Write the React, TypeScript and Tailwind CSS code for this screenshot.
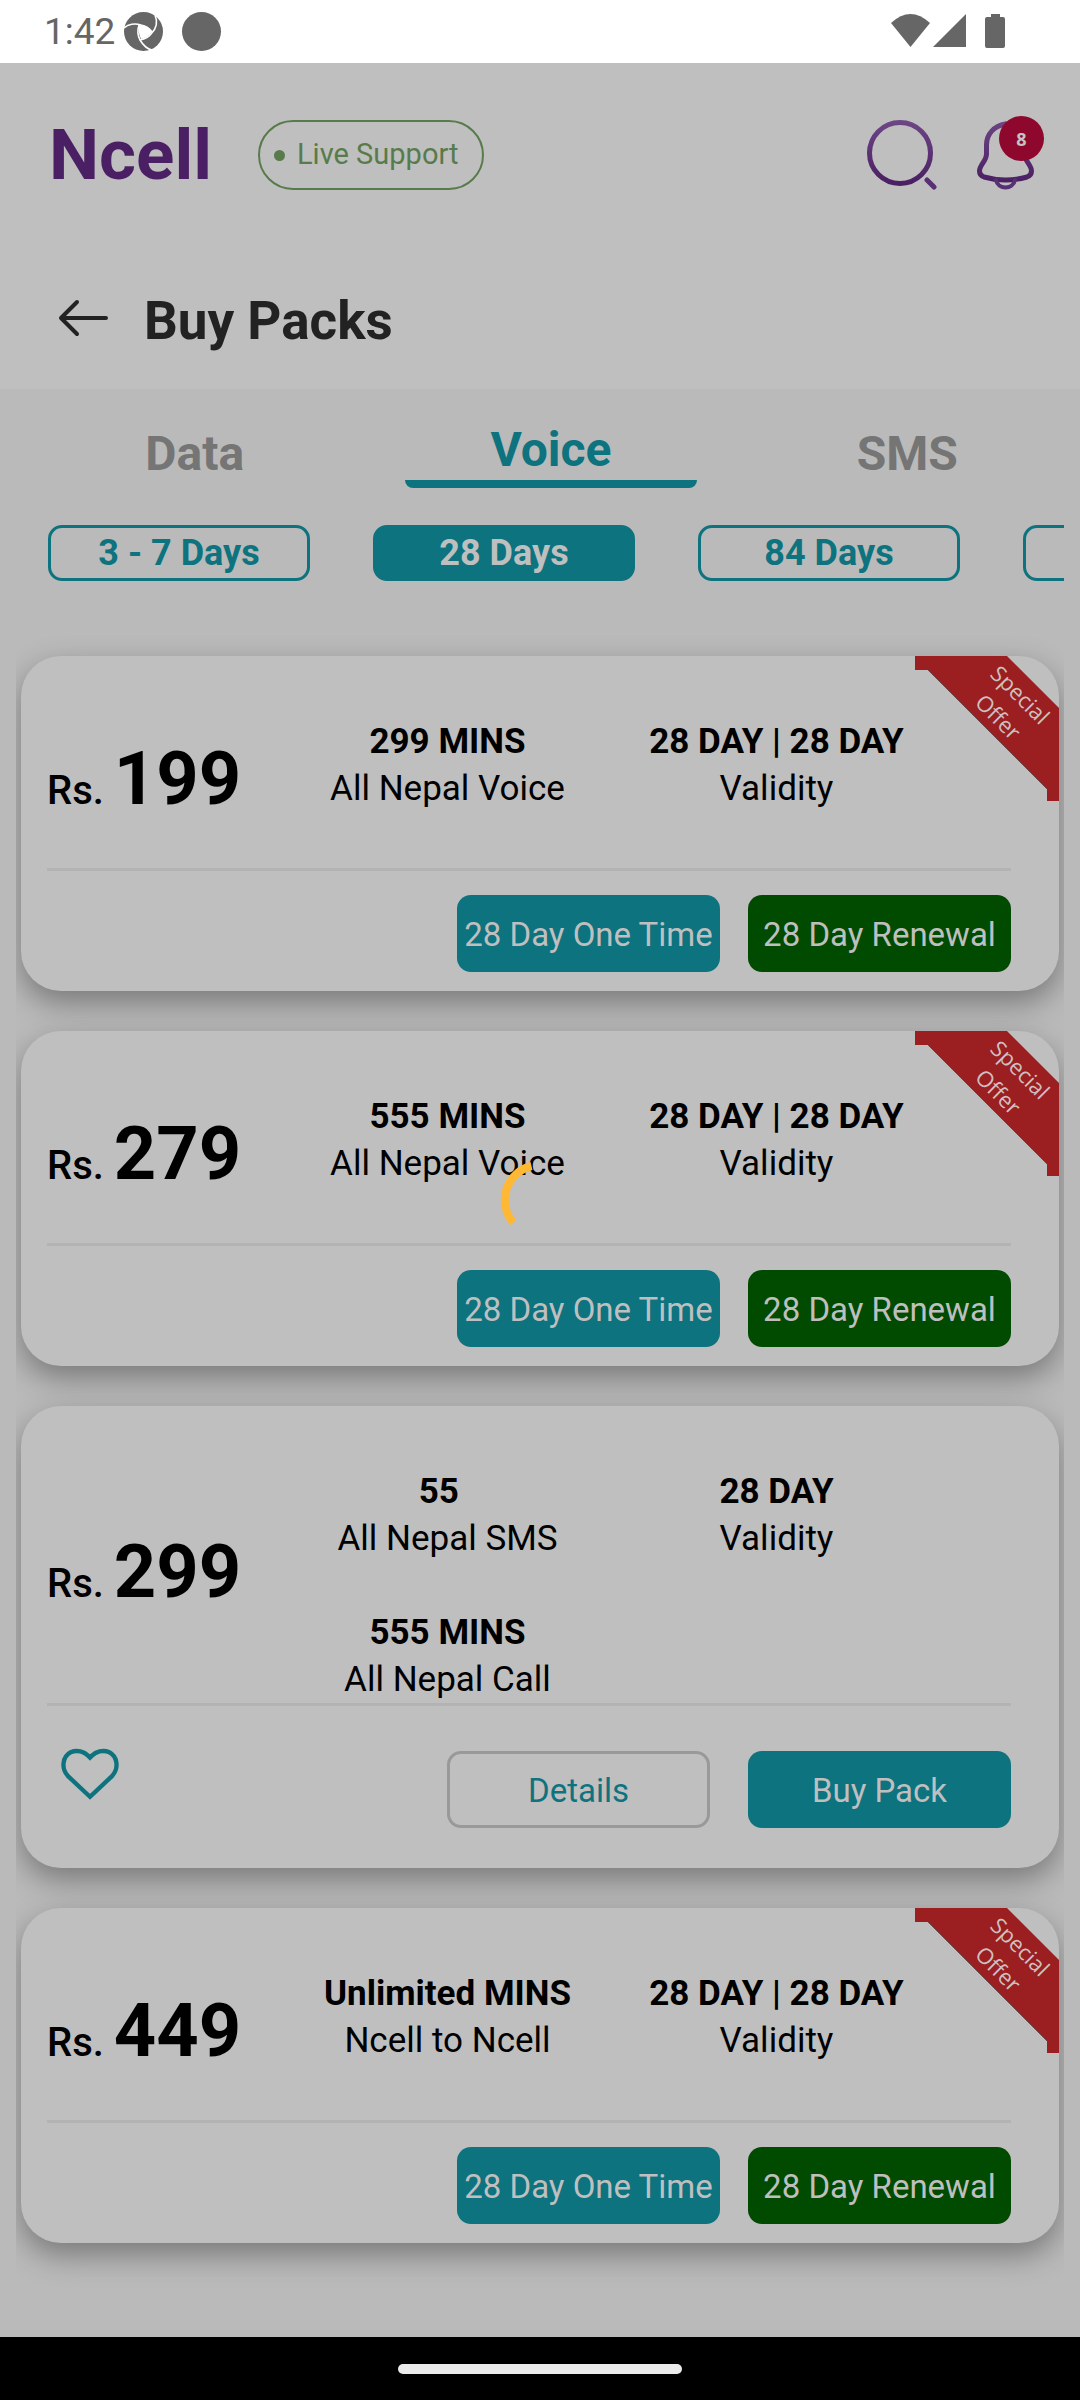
import React from "react";

type Benefit = { amount: string; label: string };

type Pack = {
  price: string;
  benefits: Benefit[];
  validity: string;
  special: boolean;
};

const packs: Pack[] = [
  {
    price: "199",
    benefits: [{ amount: "299 MINS", label: "All Nepal Voice" }],
    validity: "28 DAY | 28 DAY",
    special: true,
  },
  {
    price: "279",
    benefits: [{ amount: "555 MINS", label: "All Nepal Voice" }],
    validity: "28 DAY | 28 DAY",
    special: true,
  },
  {
    price: "299",
    benefits: [
      { amount: "55\u00a0\u00a0", label: "All Nepal SMS" },
      { amount: "555 MINS", label: "All Nepal Call" },
    ],
    validity: "28 DAY",
    special: false,
  },
  {
    price: "449",
    benefits: [{ amount: "Unlimited MINS", label: "Ncell to Ncell" }],
    validity: "28 DAY | 28 DAY",
    special: true,
  },
];

const durations = ["3 - 7 Days", "28 Days", "84 Days", ""];

function StatusBar() {
  return (
    <div className="flex h-[63px] items-center justify-between bg-white pr-[75px] pl-[44px] text-[#666666]">
      <div className="flex items-center">
        <span className="w-[80px] text-[37px] leading-[40px]">1:42</span>
        <svg width="39" height="39" viewBox="0 0 39 39" aria-hidden="true">
          <circle cx="19.5" cy="19.5" r="19.5" fill="currentColor" />
          <g fill="none" stroke="#fff" strokeWidth="1.6">
            <path d="M0 16C4 12 11 11 17 13C22 14 26 17 28 20" />
            <path d="M15 13C13 19 14 24 16 28C19 33 23 37 28 38" />
            <path d="M31 3C34 10 32 17 27 22C24 26 20 27 16 28" />
          </g>
          <path d="M15 13C21 13 25 16 28 20C25 24 21 26 17 27C15 23 14 18 15 13Z" fill="#fff" />
        </svg>
        <span className="ml-[19px] size-[39px] rounded-full bg-[#666666]" />
      </div>
      <svg width="114" height="35" viewBox="0 0 114 35" fill="currentColor" aria-hidden="true">
        <path d="M0 9Q19.500 -9 39 9L19.500 33Z" />
        <path d="M75 0V33H42Z" />
        <path d="M100 0H109V3H112Q114 3 114 5V32Q114 34 112 34H96Q94 34 94 32V5Q94 3 96 3H100Z" />
      </svg>
    </div>
  );
}

function Header() {
  return (
    <header className="flex items-center bg-[#bfbfbf] pt-[57px] pr-[36px] pl-[49px]">
      <a href="#home" className="w-[209px] text-[71px] leading-[70px] font-bold text-[#4b1f63]">
        Ncell
      </a>
      <button className="flex h-[70px] w-[226px] items-center rounded-full border-2 border-[#587b4b] pl-[14px] text-[29px] text-[#587b4b]">
        <span className="mr-[12px] size-[11px] rounded-full bg-[#587b4b]" />
        Live Support
      </button>
      <div className="ml-auto flex items-center gap-[40px]">
        <button aria-label="Search">
          <svg width="70" height="70" viewBox="0 0 70 70" fill="none" strokeLinecap="round">
            <defs>
              <linearGradient id="lens" x1="0" y1="0" x2="0" y2="1">
                <stop offset="0" stopColor="#6c4585" />
                <stop offset="1" stopColor="#4b1f63" />
              </linearGradient>
            </defs>
            <circle cx="33" cy="33" r="30.500" stroke="url(#lens)" strokeWidth="5" />
            <path d="M60 60L67 67" stroke="#583074" strokeWidth="5" />
          </svg>
        </button>
        <button aria-label="Notifications, 8 unread" className="relative">
          <svg width="67" height="70" viewBox="0 0 67 70" fill="none" strokeLinecap="round">
            <defs>
              <linearGradient id="bell" gradientUnits="userSpaceOnUse" x1="0" y1="0" x2="0" y2="62">
                <stop offset="0" stopColor="#6c4585" />
                <stop offset="1" stopColor="#4b1f63" />
              </linearGradient>
            </defs>
            <path
              d="M28.500 4C17 6 9.500 14 9.500 25V34C9.500 41 2.500 45 2.500 51C2.500 54 4 56 7 57C21 61 36 61 50 57C53 56 54.500 54 54.500 51C54.500 45 47.500 41 47.500 34V25C47.500 14 40 6 28.500 4Z"
              stroke="url(#bell)"
              strokeWidth="5"
            />
            <path d="M22 5Q28.500 -2 35 5Z" fill="#6c4585" />
            <path d="M19 60C21 70 36 70 38 60" stroke="#583074" strokeWidth="4" />
          </svg>
          <span className="absolute -top-[4px] left-[22px] flex size-[45px] items-center justify-center rounded-full bg-[#8e082e] pt-[2px] font-['Open_Sans',sans-serif] text-[18px] font-bold text-[#c4c4c4]">
            8
          </span>
        </button>
      </div>
    </header>
  );
}

function TitleBar() {
  return (
    <div className="flex items-center bg-[#bfbfbf] pt-[95px] pb-[32px] pl-[58px]">
      <button aria-label="Back" className="mr-[34px] mb-[6px]">
        <svg
          width="52"
          height="38"
          viewBox="0 0 52 38"
          fill="none"
          stroke="#222222"
          strokeWidth="4"
          strokeLinecap="round"
          strokeLinejoin="round"
        >
          <path d="M48 19H3M19 3L3 19L19 35" />
        </svg>
      </button>
      <h1 className="text-[53px] leading-[72px] font-bold text-[#222222]">Buy Packs</h1>
    </div>
  );
}

function Tabs() {
  return (
    <div
      role="tablist"
      className="grid grid-cols-3 items-start gap-[65px] pt-[29px] pr-[27px] pl-[49px] text-[48px] font-bold text-[#757575]"
    >
      <button role="tab" aria-selected="false" className="leading-[72px]">
        Data
      </button>
      <button role="tab" aria-selected="true" className="text-[#0d737f]">
        <span className="block pt-[2px] leading-[60px]">Voice</span>
        <span className="block h-[8px] rounded-b-xl bg-[#0d737f]" />
      </button>
      <button role="tab" aria-selected="false" className="leading-[72px]">
        SMS
      </button>
    </div>
  );
}

function Durations() {
  return (
    <div className="mr-[16px] -mt-[2px] flex gap-[63px] overflow-hidden pt-[37px] pl-[48px]">
      {durations.map((d, i) => (
        <button
          key={i}
          aria-label={d || "More durations"}
          className={
            "h-[56px] w-[262px] shrink-0 rounded-[14px] border-[3px] border-[#0d737f] text-[36px] leading-[50px] font-bold " +
            (i === 1 ? "bg-[#0d737f] text-[#bfbfbf]" : "text-[#0d737f]")
          }
        >
          {d}
        </button>
      ))}
    </div>
  );
}

function Ribbon() {
  return (
    <svg
      className="absolute top-0 right-0"
      width="144"
      height="145"
      viewBox="0 0 144 145"
      role="img"
      aria-label="Special Offer"
    >
      <path d="M0 0H92L144 52V145H132V133L13 14H0Z" fill="#9b1e21" />
      <path d="M13 14L132 133" stroke="#6b4a4d" strokeWidth="1" />
      <g
        fill="#cfc0c0"
        fontFamily="'Open Sans', sans-serif"
        fontSize="22"
        textAnchor="middle"
        transform="translate(103 41) rotate(45)"
      >
        <text x="0" y="5">
          Special
        </text>
        <text x="0" y="36">
          Offer
        </text>
      </g>
    </svg>
  );
}

function Detail({ amount, label }: Benefit) {
  return (
    <div className="text-center text-[35px] leading-[47px] text-black">
      <p className="font-bold">{amount}</p>
      <p>{label}</p>
    </div>
  );
}

function PackCard({ pack }: { pack: Pack }) {
  return (
    <article className="relative rounded-[40px] bg-[#bfbfbf] pr-[48px] pl-[26px] shadow-[0_12px_30px_rgba(0,0,0,0.35)]">
      {pack.special && <Ribbon />}
      <div className="grid min-h-[212px] grid-cols-[236px_1fr_1fr] pr-[70px]">
        <h2 className="self-center pt-[46px] text-[74px] leading-[80px] font-bold whitespace-nowrap text-black">
          <span className="text-[40px] font-medium">Rs. </span>
          {pack.price}
        </h2>
        <div className="flex flex-col gap-[47px] pt-[62px]">
          {pack.benefits.map((b) => (
            <Detail key={b.amount} amount={b.amount} label={b.label} />
          ))}
        </div>
        <div className="pt-[62px]">
          <Detail amount={pack.validity} label="Validity" />
        </div>
      </div>
      <hr className="border-t-[3px] border-[#b3b3b3]" />
      {pack.special ? (
        <div className="flex justify-end gap-[28px] pt-[24px] pb-[19px] text-[33px] text-[#bfbfbf]">
          <button className="h-[77px] w-[263px] rounded-[14px] bg-[#0d737f] pt-[3px] whitespace-nowrap">
            28 Day One Time
          </button>
          <button className="h-[77px] w-[263px] rounded-[14px] bg-[#004b00] pt-[3px] whitespace-nowrap">
            28 Day Renewal
          </button>
        </div>
      ) : (
        <div className="flex items-start pt-[45px] pb-[40px] text-[33px]">
          <button aria-label="Add to favourites" className="-mt-[4px] ml-[14px]">
            <svg width="58" height="54" viewBox="0 0 60 54" fill="none" stroke="#0d737f" strokeWidth="4.500">
              <path d="M30 50.500L7 29C0 21 1.500 9 10 4.500C17 1.500 24 4 28 8L30 10L32 8C36 4 43 1.500 50 4.500C58.500 9 60 21 53 29Z" />
            </svg>
          </button>
          <button className="ml-auto h-[77px] w-[263px] rounded-[14px] border-[3px] border-[#999999] pt-[3px] text-[#0d737f]">
            Details
          </button>
          <button className="ml-[38px] h-[77px] w-[263px] rounded-[14px] bg-[#0d737f] pt-[3px] text-[#bfbfbf]">
            Buy Pack
          </button>
        </div>
      )}
    </article>
  );
}

function Spinner() {
  return (
    <div
      role="status"
      aria-label="Loading"
      className="pointer-events-none absolute inset-0 flex items-center justify-center"
    >
      <svg width="80" height="80" viewBox="0 0 80 80" fill="none">
        <path d="M31.500 6A35 35 0 0 0 13 62.500" stroke="#ffb833" strokeWidth="8" />
      </svg>
    </div>
  );
}

export default function App() {
  return (
    <div className="relative flex min-h-screen flex-col bg-[#bababa] font-[Roboto,sans-serif]">
      <StatusBar />
      <Header />
      <TitleBar />
      <Tabs />
      <Durations />
      <main className="mx-[16px] flex flex-col gap-[40px] overflow-hidden px-[5px] pt-[75px] pb-[60px]">
        {packs.map((p) => (
          <PackCard key={p.price} pack={p} />
        ))}
      </main>
      <footer className="mt-auto flex h-[63px] items-center justify-center bg-black">
        <span className="h-[10px] w-[284px] rounded-full bg-[#ebebeb]" />
      </footer>
      <Spinner />
    </div>
  );
}
